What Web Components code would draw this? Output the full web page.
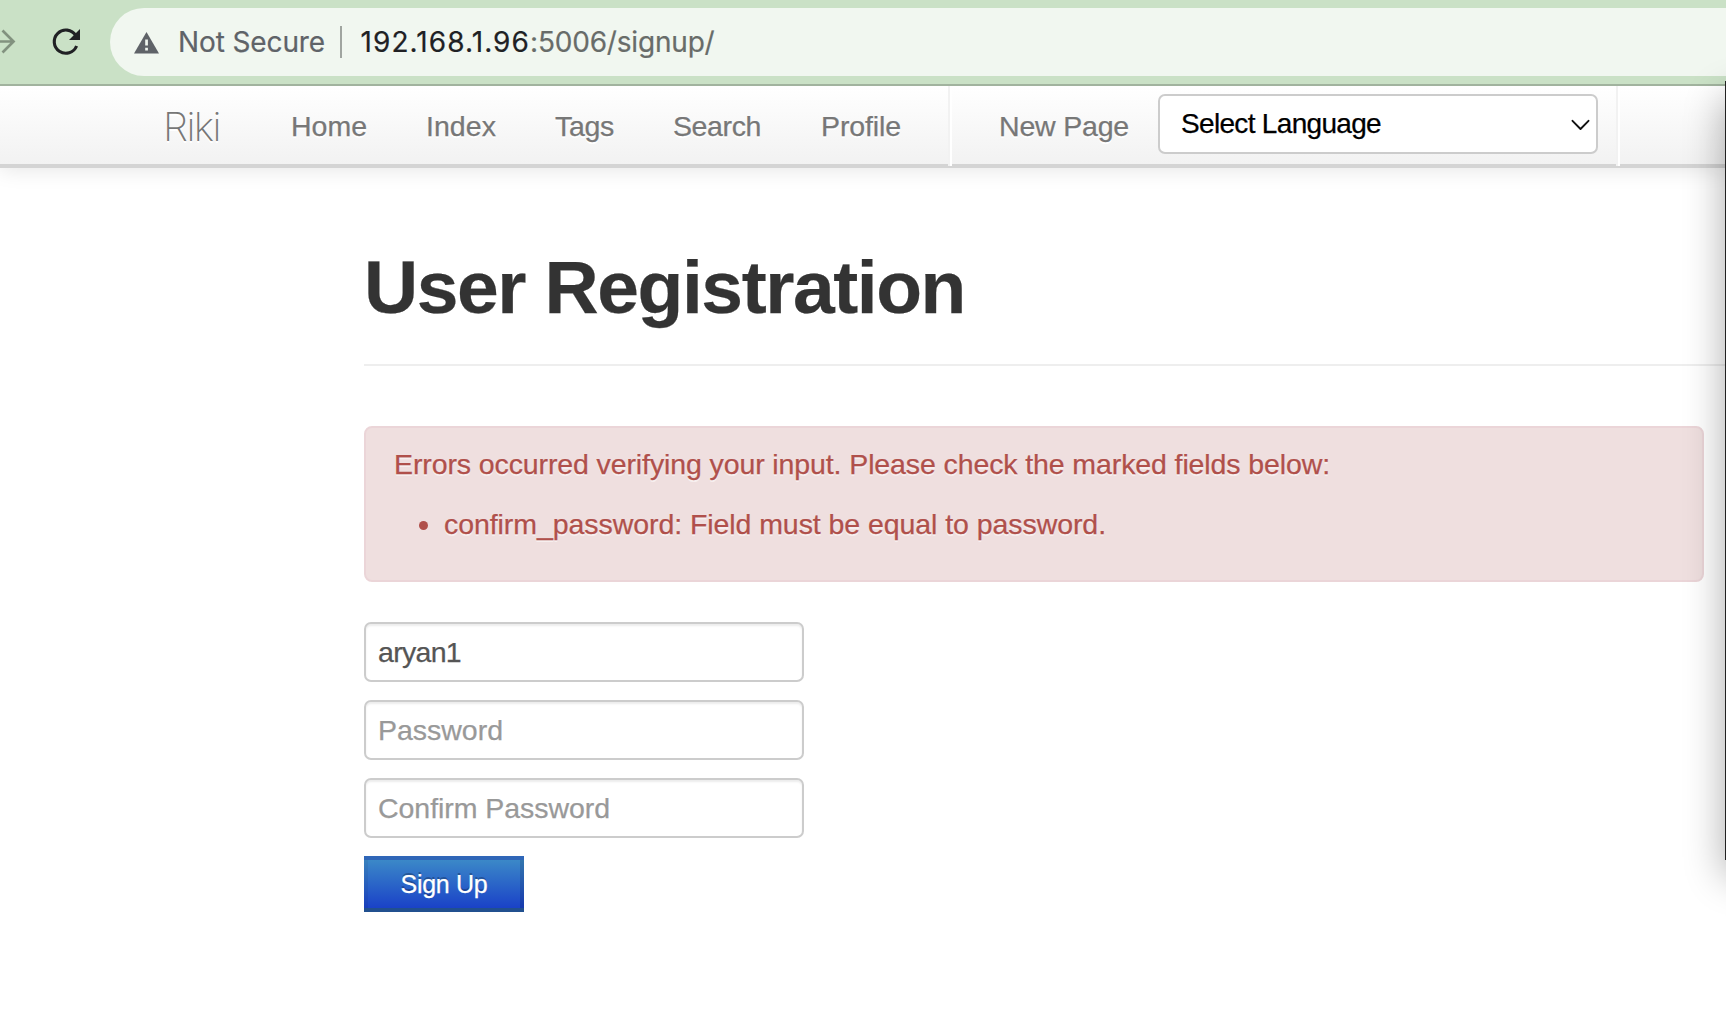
<!DOCTYPE html>
<html lang="en"><head><meta charset="utf-8"><title>User Registration</title>
<style>
html,body{margin:0;height:100%;overflow:hidden;background:#fff}
body{font-family:"Liberation Sans",Arial,sans-serif;font-size:28.5px;line-height:40px;color:#333}
</style></head><body>
<riki-app></riki-app>
<script>
const define = (name, html, setup) => customElements.define(name, class extends HTMLElement {
  connectedCallback() {
    if (this.shadowRoot) return;
    const t = document.createElement('template');
    t.innerHTML = html;
    this.attachShadow({mode: 'open'}).appendChild(t.content.cloneNode(true));
    if (setup) setup.call(this, this.shadowRoot);
  }
});

/* Text run tracked to an exact advance width. */
define('fit-text', `<style>:host{display:inline-block;white-space:pre;flex:none}span{display:inline-block;-webkit-text-stroke:var(--weight,.25px)}</style><span><slot></slot></span>`, function (root) {
  const s = root.querySelector('span'), w = +this.getAttribute('w');
  const n = [...this.textContent].length;
  this.style.width = w + 'px';
  s.style.letterSpacing = (w - s.getBoundingClientRect().width) / n + 'px';
});

define('browser-toolbar', `<style>
:host{--weight:.2px;position:relative;z-index:1;display:flex;height:84px;background:#cae1c6;border-bottom:2px solid #a1b39e;font-family:Inter,sans-serif;font-size:28px;line-height:34px;color:#5f6368}
.icons{width:110px;display:flex;align-items:center;flex:none}
.bar{flex:1;margin:8px 0;height:68px;box-sizing:border-box;padding:0 0 0 23px;border-radius:34px 0 0 34px;background:#f1f7f0;display:flex;align-items:center}
.warn{margin:2px 18px 0 0;flex:none}
.sep{width:2px;height:32px;background:#a0a5a0;margin:0 18.500px 0 15px}
b{font-weight:400;color:#202124}
.url{color:#686c69}
</style>
<div class="icons"><svg width="110" height="84" viewBox="0 0 110 84" fill="none"><path d="M0 41.5H13M2.5 30.5L13.5 41.5L2.5 52.500" stroke="#82927f" stroke-width="2.700"/><path d="M75.700 35.500A11.600 11.600 0 1 0 76.600 46" stroke="#202124" stroke-width="3.100"/><path d="M80 29V40H69Z" fill="#202124"/></svg></div>
<div class="bar"><svg class="warn" width="27" height="22" viewBox="0 0 27 22"><path d="M13.500 0L26 21.500H1Z" fill="#5f6368"/><path d="M12.200 7.500H14.900V13.500H12.200ZM12.200 15.800H14.900V18.500H12.200Z" fill="#f1f7f0"/></svg>
<fit-text w="147">Not Secure</fit-text><div class="sep"></div><b><fit-text w="169.500">192.168.1.96</fit-text></b><span class="url"><fit-text w="184.500">:5006/signup/</fit-text></span></div>`);

define('language-select', `<style>
:host{display:flex;box-sizing:border-box;width:440px;height:60px;border:2px solid #ccc;border-radius:7px;background:#fff;color:#000;align-items:center;justify-content:space-between;padding:0 6px 0 21px;text-shadow:none;font-size:28px}
svg{margin-top:1px}
</style><fit-text w="200">Select Language</fit-text><svg width="19" height="12" viewBox="0 0 19 12" fill="none"><path d="M1.500 1.800L9.500 10L17.500 1.800" stroke="#111" stroke-width="1.900" stroke-linecap="round" stroke-linejoin="round"/></svg>`);

define('nav-bar', `<style>
:host{display:flex;height:78px;background:linear-gradient(#fff,#f2f2f2);border-bottom:4px solid #d4d4d4;box-shadow:0 2px 20px rgba(0,0,0,.1);color:#777;text-shadow:0 2px 0 #fff}
.row{display:flex;align-items:flex-start;padding-left:163px}
.brand{--weight:0;font-family:Inter,sans-serif;font-weight:200;font-size:40px;margin:21px 71px 0 0}
.link{margin-top:20px}
.div{width:2px;height:80px;background:#f2f2f2;border-right:2px solid #fff}
</style><div class="row"><span class="brand"><fit-text w="57">Riki</fit-text></span>
<span class="link" style="margin-right:59px"><fit-text w="76">Home</fit-text></span>
<span class="link" style="margin-right:59px"><fit-text w="70">Index</fit-text></span>
<span class="link" style="margin-right:59px"><fit-text w="59">Tags</fit-text></span>
<span class="link" style="margin-right:60px"><fit-text w="88">Search</fit-text></span>
<span class="link" style="margin-right:47px"><fit-text w="80">Profile</fit-text></span>
<span class="div"></span>
<span class="link" style="margin:20px 29px 0 47px"><fit-text w="130">New Page</fit-text></span>
<language-select style="margin:8px 18px 0 0"></language-select><span class="div"></span></div>`);

define('page-title', `<style>
:host{display:flow-root;border-bottom:2px solid #eee;height:116px;margin-bottom:60px}
h1{margin:-1px 0 0;font-size:75px;line-height:80px;font-weight:700;color:#333}
</style><h1><slot></slot></h1>`);

define('error-alert', `<style>
:host{display:block;box-sizing:border-box;width:1340px;height:156px;border:2px solid #ebd5d8;border-radius:8px;background:#efdfdf;color:#b0504b;padding:16px 28px;text-shadow:0 2px 0 rgba(255,255,255,.5)}
.item{display:flex;align-items:center;margin-top:20px;padding-left:25px}
i{width:9px;height:9px;border-radius:50%;background:#b0504b;margin:2px 16px 0 0}
</style><fit-text w="936">Errors occurred verifying your input. Please check the marked fields below:</fit-text>
<div class="item"><i></i><fit-text w="662">confirm_password: Field must be equal to password.</fit-text></div>`);

define('text-field', `<style>
:host{display:flex;align-items:center;box-sizing:border-box;width:440px;height:60px;border:2px solid #ccc;border-radius:7px;background:#fff;box-shadow:inset 0 2px 2px rgba(0,0,0,.075);padding:0 12px;color:#999}
:host([filled]){color:#555}
</style><slot></slot>`);

define('submit-button', `<style>
button{display:flex;align-items:center;justify-content:center;box-sizing:border-box;width:160px;height:56px;margin:0;padding:0;border:0;background:linear-gradient(#3b88c8 4px,#1a42c8 52px);box-shadow:inset 0 4px #2f66b8,inset 0 -4px #21508f,inset -4px 0 rgba(0,0,0,.13),inset 4px 0 rgba(0,0,0,.05);color:#fff;font:25px/40px "Liberation Sans",sans-serif;text-shadow:0 -2px 0 rgba(0,0,0,.25)}
:host{display:block}
</style><button><fit-text w="87">Sign Up</fit-text></button>`);

/* Edge of the neighbouring window, casting its shadow over the page. */
define('window-edge', `<style>
:host{position:absolute;z-index:2;left:1725px;top:81px;width:200px;height:779px;background:#222;box-shadow:0 16px 38px rgba(0,0,0,.33)}
</style>`);

define('riki-app', `<style>
:host{display:block;position:relative;width:1726px;height:1026px;overflow:hidden;background:#fff}
main{padding:80px 0 0 364px}
form{display:flex;flex-direction:column;gap:18px;margin-top:40px}
</style><browser-toolbar></browser-toolbar><nav-bar></nav-bar>
<main><page-title><fit-text w="601">User Registration</fit-text></page-title><error-alert></error-alert>
<form><text-field filled><fit-text w="83">aryan1</fit-text></text-field>
<text-field><fit-text w="125">Password</fit-text></text-field>
<text-field><fit-text w="232">Confirm Password</fit-text></text-field>
<submit-button></submit-button></form></main><window-edge></window-edge>`);
</script></body></html>
